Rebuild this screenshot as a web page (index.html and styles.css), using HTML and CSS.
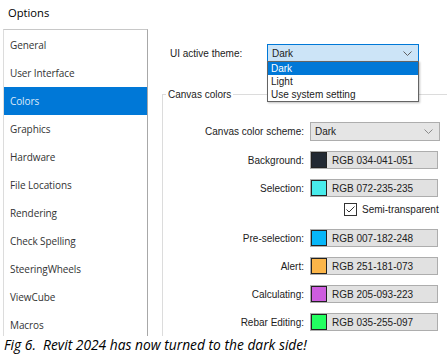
FILE: index.html
```html
<html>
    <head>
        <title>Options</title>
        <meta name="viewport" content="width=device-width, initial-scale=1.0">
        <link rel="stylesheet" href="styles.css">
    </head>
    <body>
        <div class="title">Options</div>
        <div class="main">
            <ul class="nav">
                <li>General</li>
                <li>User Interface</li>
                <li class="sel">Colors</li>
                <li>Graphics</li>
                <li>Hardware</li>
                <li>File Locations</li>
                <li>Rendering</li>
                <li>Check Spelling</li>
                <li>SteeringWheels</li>
                <li>ViewCube</li>
                <li>Macros</li>
            </ul>
            <div class="content">
                <div class="theme">
                    <span class="theme-label">UI active theme:</span>
                    <div class="combo active">
                        <span>Dark</span>
                        <svg width="9" height="5" viewBox="0 0 9 5"><polyline points="0.5,0.5 4.5,4.5 8.5,0.5" fill="none" stroke="#606060" stroke-width="1"/></svg>
                        <ul class="popup">
                            <li class="hi">Dark</li>
                            <li>Light</li>
                            <li>Use system setting</li>
                        </ul>
                    </div>
                </div>
                <fieldset class="group">
                    <legend>Canvas colors</legend>
                    <div class="grid">
                        <label>Canvas color scheme:</label>
                        <div class="combo">
                            <span>Dark</span>
                            <svg width="9" height="5" viewBox="0 0 9 5"><polyline points="0.5,0.5 4.5,4.5 8.5,0.5" fill="none" stroke="#8a8a8a" stroke-width="1"/></svg>
                        </div>

                        <label>Background:</label>
                        <div class="color"><i class="sw" style="background:rgb(34,41,51)"></i>RGB 034-041-051</div>

                        <label>Selection:</label>
                        <div class="color"><i class="sw" style="background:rgb(72,235,235)"></i>RGB 072-235-235</div>

                        <span></span>
                        <div class="check">
                            <svg width="13" height="13" viewBox="0 0 13 13"><rect x="0.5" y="0.5" width="12" height="12" fill="#fff" stroke="#333"/><polyline points="2.5,6.5 5,9 10.5,3.5" fill="none" stroke="#333" stroke-width="1"/></svg>
                            Semi-transparent
                        </div>

                        <label>Pre-selection:</label>
                        <div class="color"><i class="sw" style="background:rgb(7,182,248)"></i>RGB 007-182-248</div>

                        <label>Alert:</label>
                        <div class="color"><i class="sw" style="background:rgb(251,181,73)"></i>RGB 251-181-073</div>

                        <label>Calculating:</label>
                        <div class="color"><i class="sw" style="background:rgb(205,93,223)"></i>RGB 205-093-223</div>

                        <label>Rebar Editing:</label>
                        <div class="color"><i class="sw" style="background:rgb(35,255,97)"></i>RGB 035-255-097</div>
                    </div>
                </fieldset>
            </div>
        </div>
        <div class="caption">Fig 6.&nbsp; Revit 2024 has now turned to the dark side!</div>
    </body>
</html>
```

FILE: styles.css
```css
body {margin:0;background:#fff;width:447px;height:357px;overflow:hidden;font-family:"Liberation Sans",Arial,sans-serif;}

.title {font-family:"Open Sans",sans-serif;font-size:11.2px;color:#000;padding:5px 0 0 8px;box-sizing:border-box;height:29px;}

.main {display:flex;height:307px;overflow:hidden;}

.nav {flex-shrink:0;list-style:none;margin:0 0 0 3px;padding:1px 0 0 0;width:143px;border-top:1px solid #c8c8c8;border-left:1px solid #dcdcdc;border-right:1px solid #a8a8a8;font-family:"Open Sans",sans-serif;font-size:10px;letter-spacing:-0.1px;color:#333;}
.nav li {height:28px;line-height:28px;padding-left:6px;}
.nav li.sel {background:#0078d7;color:#dce9f7;}

.content {flex:1;min-width:0;font-size:10px;color:#222;}

.theme {display:flex;align-items:center;margin-top:15px;height:18px;}
.theme-label {margin-left:22px;width:97px;}

.combo {position:relative;display:flex;align-items:center;justify-content:space-between;box-sizing:border-box;height:18px;padding:0 6px 0 4px;border:1px solid #adadad;background:#e5e5e5;}
.combo.active {flex-shrink:0;width:152px;background:#cce4f7;border-color:#0078d7;}

.popup {position:absolute;left:-1px;top:16px;width:150px;margin:0;padding:0;list-style:none;background:#fff;border:1px solid #646464;box-shadow:1px 1px 2px rgba(0,0,0,0.25);z-index:2;}
.popup li {height:13px;line-height:13px;padding-left:3px;}
.popup li.hi {background:#0078d7;color:#fff;}

.group {margin:26px 0 0 14px;padding:0;width:320px;height:300px;border:1px solid #dcdcdc;}
.group legend {margin-left:3px;padding:0 2px;line-height:13px;}

.grid {display:grid;grid-template-columns:141px 130px;column-gap:6px;row-gap:10px;align-items:center;padding-top:21px;}
.grid label {text-align:right;}
.grid .combo {height:19px;}

.color {display:flex;align-items:center;box-sizing:border-box;height:18px;border:1px solid #adadad;background:#e1e1e1;width:128px;}
.sw {display:block;box-sizing:border-box;width:16px;height:16px;border:1px solid #222;margin-right:5px;}

.check {display:flex;align-items:center;gap:5px;margin:-4px 0 3px 34px;white-space:nowrap;}

.caption {font-family:"Open Sans",sans-serif;font-style:italic;font-size:13.8px;color:#000;padding:0 0 0 4px;line-height:18px;}
```
